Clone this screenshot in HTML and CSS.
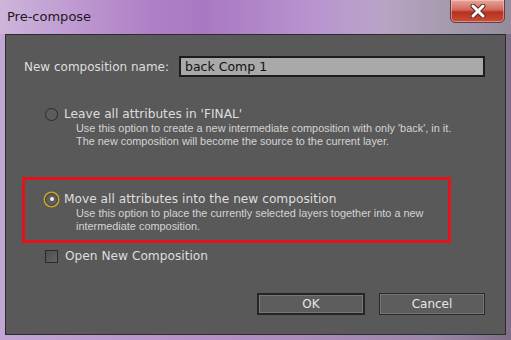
FILE: index.html
```html
<!DOCTYPE html>
<html lang="en">
<head>
    <meta charset="UTF-8">
    <title>Pre-compose</title>
    <link rel="stylesheet" href="styles.css">
</head>
<body>
    <div class="window">
        <div class="titlebar">
            <span class="title">Pre-compose</span>
            <button class="close-btn">
                <svg width="22" height="14" viewBox="0 0 22 14">
                    <path d="M6 2 L16 12 M16 2 L6 12" stroke="#5a2a2a" stroke-width="5" stroke-linecap="round"/>
                    <path d="M6 2 L16 12 M16 2 L6 12" stroke="#fff" stroke-width="3" stroke-linecap="round"/>
                </svg>
            </button>
        </div>

        <div class="panel">
            <div class="name-row">
                <label class="name-label">New composition name:</label>
                <input type="text" class="name-input" value="back Comp 1">
            </div>

            <div class="option">
                <div class="option-head">
                    <span class="radio"></span>
                    <span class="option-label">Leave all attributes in 'FINAL'</span>
                </div>
                <div class="option-desc">Use this option to create a new intermediate composition with only 'back', in it.<br>The new composition will become the source to the current layer.</div>
            </div>

            <div class="option highlighted">
                <div class="option-head">
                    <span class="radio checked"></span>
                    <span class="option-label">Move all attributes into the new composition</span>
                </div>
                <div class="option-desc">Use this option to place the currently selected layers together into a new<br>intermediate composition.</div>
            </div>

            <div class="check-row">
                <span class="checkbox"></span>
                <span class="option-label">Open New Composition</span>
            </div>

            <div class="button-row">
                <button class="btn default">OK</button>
                <button class="btn">Cancel</button>
            </div>
        </div>
    </div>
</body>
</html>
```

FILE: styles.css
```css
body {
    margin: 0;
    padding: 0;
    font-family: "DejaVu Sans", Tahoma, sans-serif;
    background: #a08aae;
}

.window {
    width: 511px;
    height: 340px;
    display: flex;
    flex-direction: column;
    background: linear-gradient(90deg, #c2a6d4 0%, #b690c8 40%, #9c86a8 85%, #7f6e88 100%);
}

.titlebar {
    height: 34px;
    display: flex;
    align-items: flex-start;
    justify-content: space-between;
    background: linear-gradient(90deg, #cdb6da 0%, #c3a2d4 10%, #ae7fc6 30%, #a978c2 40%, #b995d0 62%, #b8a4c6 75%, #a298aa 90%, #958b9c 100%);
}

.title {
    font-size: 13px;
    color: #1e1824;
    margin: 9px 0 0 7px;
}

.close-btn {
    width: 55px;
    height: 24px;
    margin: -1px 6px 0 0;
    padding: 0;
    border: 1px solid #5e3f4e;
    border-radius: 0 0 5px 5px;
    background: linear-gradient(180deg, #e8a598 0%, #d0685a 45%, #b8301e 55%, #c8503a 100%);
    box-shadow: inset 0 0 0 1px rgba(255, 220, 210, 0.45);
    display: flex;
    align-items: center;
    justify-content: center;
}

.panel {
    flex: 1;
    margin: 0 5px 5px 5px;
    background: #595959;
    border: 1px solid #2c2c2c;
    display: flex;
    flex-direction: column;
    color: #dcdcdc;
}

.name-row {
    display: flex;
    align-items: center;
    margin: 21px 0 0 18px;
}

.name-label {
    font-size: 12px;
    width: 155px;
    color: #dedede;
}

.name-input {
    width: 298px;
    height: 17px;
    padding: 0 0 0 4px;
    font-family: "DejaVu Sans", Tahoma, sans-serif;
    font-size: 12.5px;
    color: #111;
    background: #a9a9a9;
    border: 2px solid #1c1c1c;
    outline: none;
}

.option {
    width: 429px;
    margin: 15px 0 0 16px;
    padding: 12px 0 7px 20px;
    box-sizing: border-box;
    border: 3px solid transparent;
}

.option.highlighted {
    margin-top: 19px;
    border-color: #e4121a;
}

.option-head {
    display: flex;
    align-items: center;
    height: 14px;
}

.option-label {
    font-size: 12.2px;
    color: #dedede;
    margin-left: 6px;
    white-space: nowrap;
}

.option-desc {
    font-family: "Liberation Sans", Arial, sans-serif;
    font-size: 10.9px;
    line-height: 13px;
    color: #d4d4d4;
    margin: 1px 0 0 31px;
    white-space: nowrap;
}

.radio {
    width: 11px;
    height: 11px;
    border: 1.5px solid #2a2a2a;
    border-radius: 50%;
    background: #5d5d5d;
    display: flex;
    align-items: center;
    justify-content: center;
}

.radio.checked {
    border-color: #3a3a3a;
    box-shadow: 0 0 0 1.5px #c9a226;
}

.radio.checked::after {
    content: "";
    width: 4px;
    height: 4px;
    border-radius: 50%;
    background: #f0f0f0;
}

.check-row {
    display: flex;
    align-items: center;
    margin: 6px 0 0 39px;
    height: 14px;
}

.checkbox {
    width: 11px;
    height: 11px;
    border: 1.5px solid #2a2a2a;
    background: linear-gradient(135deg, #505050, #626262);
}

.check-row .option-label {
    margin-left: 7px;
}

.button-row {
    display: flex;
    justify-content: flex-end;
    gap: 14px;
    margin: 30px 20px 0 0;
}

.btn {
    width: 106px;
    height: 22px;
    font-family: "DejaVu Sans", Tahoma, sans-serif;
    font-size: 12px;
    color: #e6e6e6;
    background: #5d5d5d;
    border: 1px solid #2a2a2a;
    box-shadow: inset 0 0 0 1px #777;
    padding: 0;
}

.btn.default {
    width: 108px;
    border: 2px solid #252525;
}
```
